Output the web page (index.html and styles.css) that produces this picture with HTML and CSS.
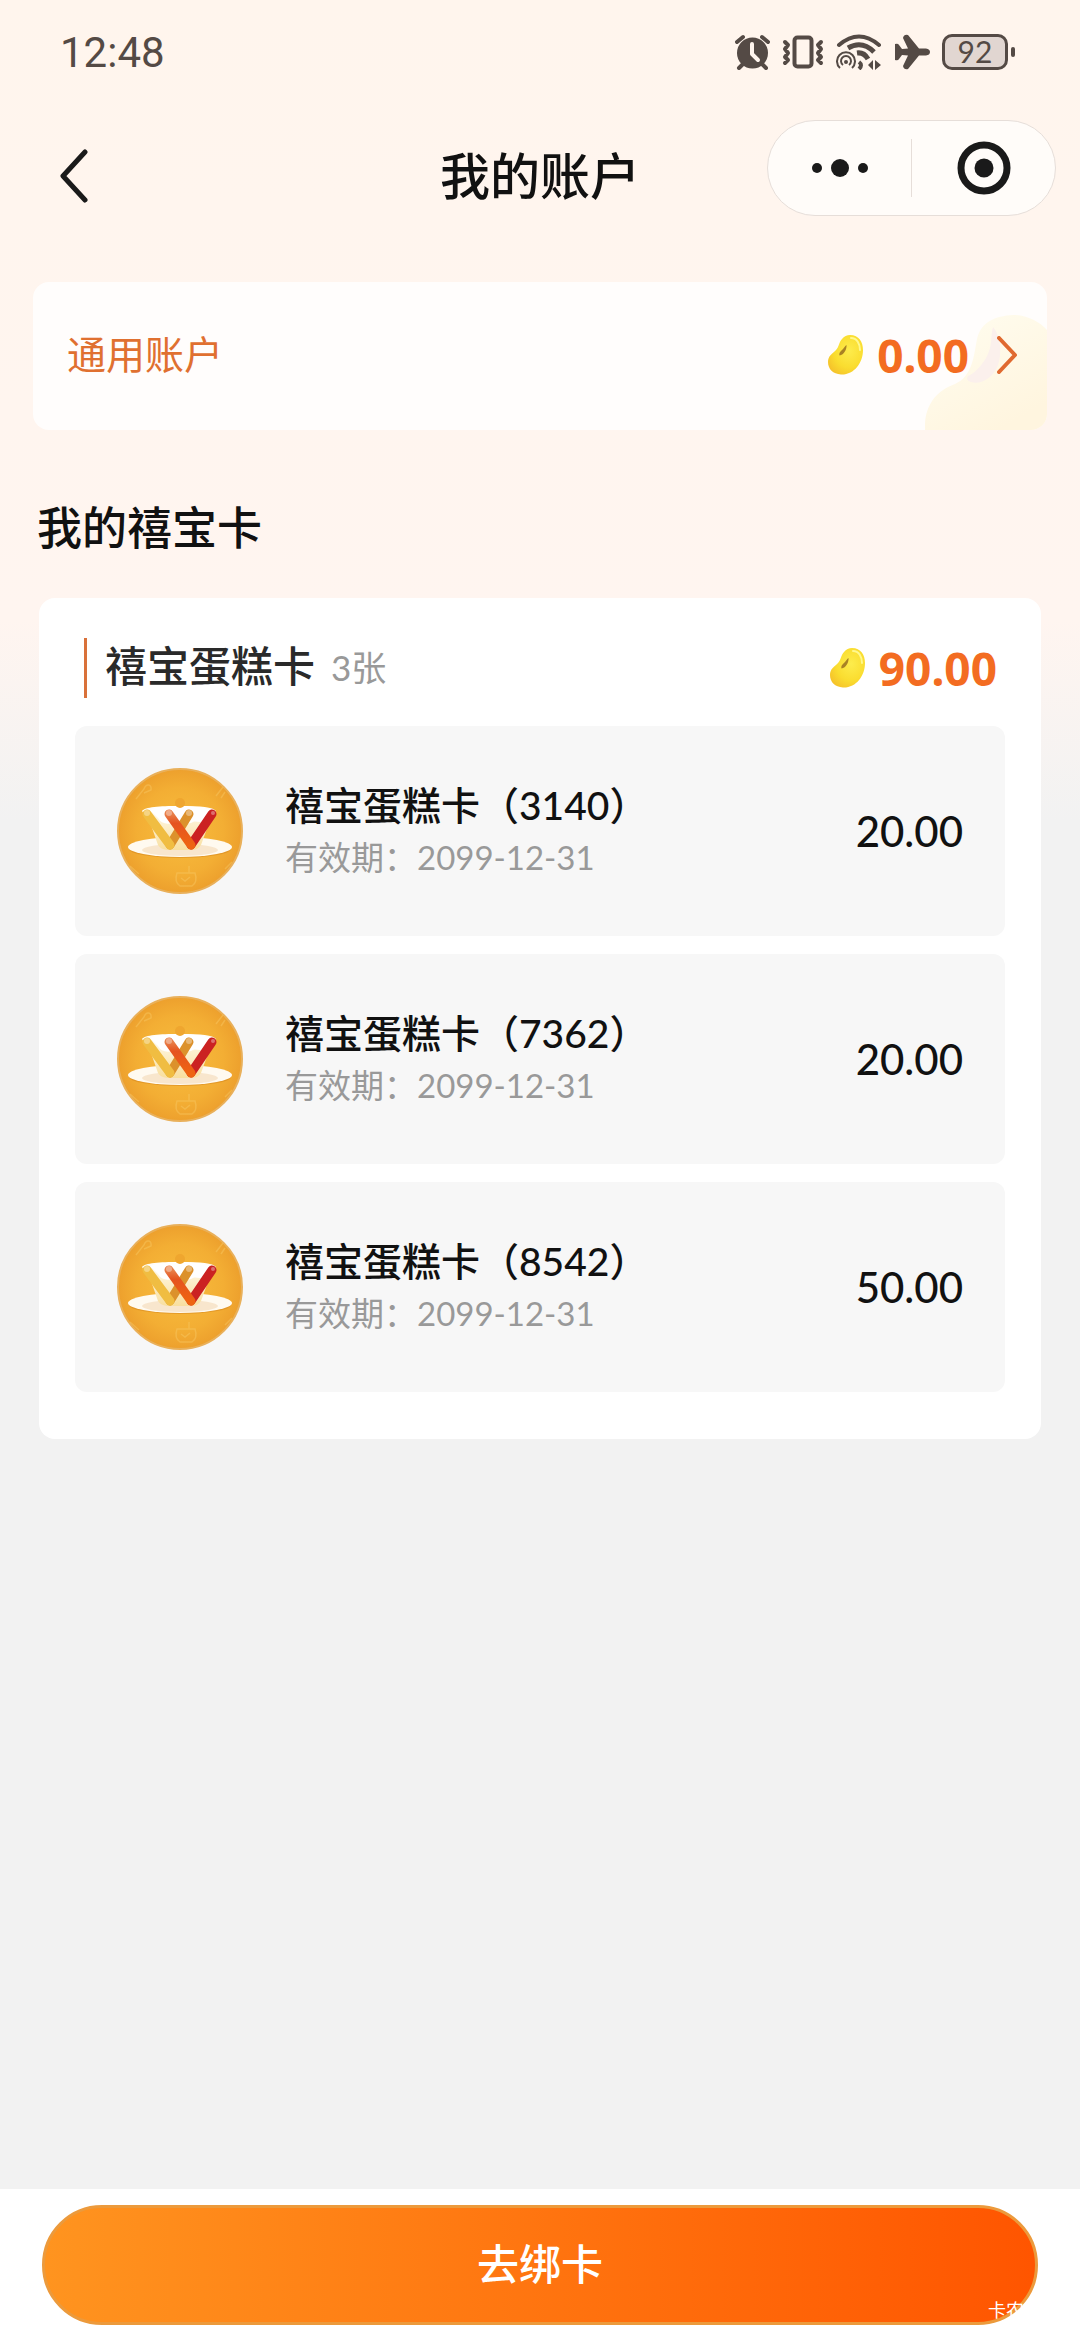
FILE: index.html
```
<!DOCTYPE html>
<html lang="zh-CN">
<head>
  <meta charset="utf-8">
  <meta name="viewport" content="width=device-width, initial-scale=1">
  <title>我的账户</title>
  <link rel="stylesheet" href="styles.css">
</head>
<body>
  <!-- shared shapes -->
  <svg class="defs" aria-hidden="true">
    <defs>
      <radialGradient id="beanFill" cx="0.6" cy="0.4" r="0.7">
        <stop offset="0" stop-color="#fdec4c"/>
        <stop offset="0.6" stop-color="#fadd30"/>
        <stop offset="1" stop-color="#f5c22a"/>
      </radialGradient>
      <linearGradient id="decoFill" x1="0" y1="0" x2="0.6" y2="1">
        <stop offset="0" stop-color="#fffdf0"/>
        <stop offset="1" stop-color="#fff5df"/>
      </linearGradient>
      <radialGradient id="logoFill">
        <stop offset="0" stop-color="#f8bd3e"/>
        <stop offset="0.7" stop-color="#f3ae34"/>
        <stop offset="1" stop-color="#eda02d"/>
      </radialGradient>
      <linearGradient id="cupFill" x1="0" y1="0" x2="0" y2="1">
        <stop offset="0" stop-color="#ffffff"/>
        <stop offset="0.4" stop-color="#fdf0cf"/>
        <stop offset="1" stop-color="#f8dfa0"/>
      </linearGradient>
      <linearGradient id="wOrange" x1="0" y1="0" x2="0" y2="1">
        <stop offset="0" stop-color="#e8804a"/>
        <stop offset="0.3" stop-color="#e5531f"/>
        <stop offset="1" stop-color="#ee6412"/>
      </linearGradient>
    </defs>
    <symbol id="bean" viewBox="0 0 35 40">
      <path d="M22 0C31 0 35 7 35 15C35 28 26 40 13 39.500C5 39 0 34 0 27C0 21 4 19 8 15C11 12 11 7 14 4C16 1.500 19 0 22 0Z" fill="url(#beanFill)"/>
      <path d="M23 3C29 3 32 9 32 15" fill="none" stroke="#fff88e" stroke-width="2" stroke-linecap="round"/>
      <path d="M18.500 10C19 14 16 20 11.500 20.500C10.500 18 13 16 15 14C16.500 12.500 17 10.500 18.500 10Z" fill="#a98224"/>
    </symbol>
    <symbol id="logo" viewBox="0 0 126 126">
      <circle cx="63" cy="63" r="62" fill="url(#logoFill)" stroke="#e9b05a" stroke-width="2"/>
      <g fill="none" stroke="#f9c964" stroke-width="1.500" opacity="0.45">
        <path d="M19 31L27 21C29 15 35 16 34 22L27 25M99 28L106 19M104 30L108 24"/>
        <path d="M60 105H78Q81 114 75 118H63Q57 114 60 105ZM72 105V98M64 110L68 113L73 109"/>
        <path d="M13 98L22 106M108 101L115 94"/>
      </g>
      <ellipse cx="63" cy="81" rx="51" ry="9" fill="#d98a20" opacity="0.6"/>
      <ellipse cx="63" cy="79" rx="52" ry="10" fill="#fffaf0"/>
      <ellipse cx="63" cy="82" rx="38" ry="6" fill="#f8e6cd"/>
      <path d="M25 43C28 39 42 38 63 38C84 38 96 39 99 43L92 55L84 77Q81 82 74 82H50Q43 81 41 77L34 57Z" fill="url(#cupFill)"/>
      <path d="M33 42C45 37 81 37 93 42L89 51C84 57 80 52 76 54C69 58 65 53 59 54C51 57 44 56 41 50Z" fill="#fff"/>
      <circle cx="63" cy="35" r="5" fill="#efa62f"/>
      <g fill="none" stroke-width="9" stroke-linecap="round">
        <path d="M72 46L53 77" stroke="#dc912b"/>
        <path d="M30 46L53 77" stroke="#f0bd42"/>
        <path d="M95 46L74 77" stroke="#cb2222"/>
        <path d="M52 46L74 77" stroke="url(#wOrange)"/>
      </g>
      <g fill="#fff" opacity="0.35">
        <circle cx="30" cy="45" r="3"/><circle cx="52" cy="45" r="3"/><circle cx="72" cy="45" r="3"/><circle cx="96" cy="45" r="2"/>
      </g>
    </symbol>
  </svg>

  <div class="page">
    <div class="status-bar">
      <span class="time">12:48</span>
      <div class="status-icons">
        <!-- alarm -->
        <svg width="35" height="36" viewBox="0 0 35 36">
          <circle cx="17.500" cy="19" r="15.500" fill="#544a45"/>
          <path d="M2 8L8 3M33 8L27 3M8 30L4 34M27 30L31 34" stroke="#544a45" stroke-width="4" stroke-linecap="round"/>
          <path d="M17 10V20L23 26" fill="none" stroke="#fff5ee" stroke-width="4" stroke-linecap="round" stroke-linejoin="round"/>
        </svg>
        <!-- vibrate -->
        <svg width="42" height="36" viewBox="0 0 42 36" fill="none" stroke="#544a45">
          <rect x="12.500" y="3.500" width="17" height="29" rx="3" stroke-width="4"/>
          <path d="M3 8L6 11L3 15L6 19L3 23L6 26L3 29M39 8L36 11L39 15L36 19L39 23L36 26L39 29" stroke-width="4" stroke-linecap="round" stroke-linejoin="round"/>
        </svg>
        <!-- wifi with hotspot -->
        <svg width="46" height="36" viewBox="0 0 46 36" fill="none" stroke="#544a45">
          <path d="M3 11Q23 -6 43 11" stroke-width="4" stroke-linecap="round"/>
          <path d="M12 14Q26 6 38 18" stroke-width="5"/>
          <path d="M21 19Q28 18 32 25" stroke-width="5"/>
          <path d="M4 34A9 9 0 1 1 16 34" stroke-width="2"/>
          <path d="M7 31A5 5 0 1 1 13 31" stroke-width="2"/>
          <circle cx="10" cy="28" r="2" fill="#544a45" stroke="none"/>
          <path d="M23 28Q27 31 23 35" stroke-width="4"/>
          <path d="M32 31L37 26V36ZM39 26L45 31L39 36Z" fill="#544a45" stroke="none"/>
        </svg>
        <!-- airplane -->
        <svg width="36" height="36" viewBox="0 0 36 36" fill="#544a45">
          <path d="M1 10Q4 9 5 11L8 15L14 14.500L9 4Q10 0 14 1L25 14.500H32Q36 15 36 18Q36 21 32 21.500H25L14 35Q10 36 9 32L14 21.500L8 21L5 25Q4 27 1 26Z"/>
        </svg>
        <div class="battery"><span>92</span></div>
      </div>
    </div>

    <header class="nav">
      <button class="back" aria-label="返回">
        <svg width="28" height="54" viewBox="0 0 28 54">
          <path d="M25 3L3 27L25 51" fill="none" stroke="#1a1a1a" stroke-width="5" stroke-linecap="round" stroke-linejoin="round"/>
        </svg>
      </button>
      <h1>我的账户</h1>
      <div class="capsule">
        <button aria-label="更多">
          <svg width="58" height="20" viewBox="0 0 58 20" fill="#1a1a1a">
            <circle cx="6" cy="10" r="5"/><circle cx="29" cy="10" r="9"/><circle cx="52" cy="10" r="5"/>
          </svg>
        </button>
        <button aria-label="关闭">
          <svg width="54" height="54" viewBox="0 0 54 54">
            <circle cx="27" cy="27" r="23" fill="none" stroke="#1a1a1a" stroke-width="7"/>
            <circle cx="27" cy="27" r="9.500" fill="#1a1a1a"/>
          </svg>
        </button>
      </div>
    </header>

    <main>
      <a class="account" href="#">
        <svg class="account-deco" width="122" height="116" viewBox="0 0 122 116">
          <path d="M0 116C-1 95 8 78 30 70C48 62 49 40 52 25C56 8 70 2 88 1C102 1 115 8 122 16V116Z" fill="url(#decoFill)"/>
          <path d="M68 13C76 22 77 40 73 51C68 64 56 71 46 68Q40 66 43 62C52 58 62 46 65 34C67 26 66 20 68 13Z" fill="#fbf0ec"/>
        </svg>
        <span class="account-name">通用账户</span>
        <svg class="bean"><use href="#bean"/></svg>
        <span class="money">0.00</span>
        <svg class="arrow" width="20" height="38" viewBox="0 0 20 38">
          <path d="M2 2L18 19L2 36" fill="none" stroke="#e06a30" stroke-width="4" stroke-linecap="round" stroke-linejoin="round"/>
        </svg>
      </a>

      <h2>我的禧宝卡</h2>

      <section class="group">
        <div class="group-head">
          <h3>禧宝蛋糕卡</h3>
          <span class="count">3张</span>
          <svg class="bean"><use href="#bean"/></svg>
          <span class="money">90.00</span>
        </div>
        <ul class="cards">
          <li class="card">
            <svg class="logo"><use href="#logo"/></svg>
            <div class="info">
              <p class="name">禧宝蛋糕卡（3140）</p>
              <p class="date">有效期：2099-12-31</p>
            </div>
            <span class="value">20.00</span>
          </li>
          <li class="card">
            <svg class="logo"><use href="#logo"/></svg>
            <div class="info">
              <p class="name">禧宝蛋糕卡（7362）</p>
              <p class="date">有效期：2099-12-31</p>
            </div>
            <span class="value">20.00</span>
          </li>
          <li class="card">
            <svg class="logo"><use href="#logo"/></svg>
            <div class="info">
              <p class="name">禧宝蛋糕卡（8542）</p>
              <p class="date">有效期：2099-12-31</p>
            </div>
            <span class="value">50.00</span>
          </li>
        </ul>
      </section>
    </main>

    <footer class="footer">
      <button class="bind">去绑卡</button>
      <span class="mark">卡农</span>
    </footer>
  </div>
</body>
</html>
```
FILE: styles.css
```
* {
  box-sizing: border-box;
}

body {
  margin: 0;
  background: #f2f2f2;
  color: #111;
  font-family: Lato, "Noto Sans CJK SC", sans-serif;
}

h1, h2, h3, p, ul {
  margin: 0;
  padding: 0;
}

h1, h2, h3 {
  font-weight: 500;
}

button {
  border: 0;
  padding: 0;
  background: none;
  font-family: inherit;
  cursor: pointer;
}

svg {
  display: block;
  flex-shrink: 0;
}

.defs {
  position: absolute;
  width: 0;
  height: 0;
}

.page {
  min-height: 100vh;
  display: flex;
  flex-direction: column;
  background: linear-gradient(#fff5ed 0, #fff5f0 620px, #f2f2f2 820px);
}

/* status bar */
.status-bar {
  height: 104px;
  padding: 0 65px 0 60px;
  display: flex;
  align-items: center;
  justify-content: space-between;
  color: #544a45;
}

.time {
  font-family: Roboto, sans-serif;
  font-size: 42px;
}

.status-icons {
  display: flex;
  align-items: center;
  gap: 12px;
}

.battery {
  position: relative;
  width: 66px;
  height: 36px;
  margin-right: 7px;
  border: 3px solid #544a45;
  border-radius: 10px;
  background: #e1d6d1;
  font-size: 30px;
  line-height: 28px;
  text-align: center;
}

.battery::after {
  content: "";
  position: absolute;
  right: -10px;
  top: 10px;
  width: 4px;
  height: 10px;
  border-radius: 2px;
  background: #544a45;
}

/* title bar */
.nav {
  height: 144px;
  padding: 0 24px;
  display: grid;
  grid-template-columns: 1fr auto 1fr;
  align-items: center;
}

.back {
  justify-self: start;
  padding: 10px 36px;
}

.nav h1 {
  font-size: 50px;
  line-height: 72px;
}

.capsule {
  justify-self: end;
  align-self: start;
  display: flex;
  align-items: center;
  width: 289px;
  height: 96px;
  margin-top: 16px;
  border: 1px solid #e6ded9;
  border-radius: 48px;
  background: #fffcf9;
}

.capsule button {
  flex: 1;
  height: 58px;
  display: flex;
  align-items: center;
  justify-content: center;
}

.capsule button + button {
  border-left: 1px solid #e6ded9;
}

main {
  padding: 34px 33px 40px;
}

.account {
  position: relative;
  display: flex;
  align-items: center;
  height: 148px;
  padding: 0 30px 2px 34px;
  border-radius: 16px;
  background: #fffdfc;
  color: #e07030;
  text-decoration: none;
  overflow: hidden;
}

.account-deco {
  position: absolute;
  right: 0;
  bottom: 0;
}

.account-name {
  flex: 1;
  padding-bottom: 6px;
  font-size: 39px;
}

.bean {
  position: relative;
  width: 35px;
  height: 40px;
}

.money {
  position: relative;
  margin-left: 14px;
  font-family: "Noto Sans", sans-serif;
  font-size: 46px;
  line-height: 60px;
  font-weight: 700;
  color: #f36c21;
}

.arrow {
  position: relative;
  margin-left: 28px;
}

h2 {
  padding: 66px 4px 38px;
  font-size: 45px;
  line-height: 64px;
}

/* card group */
.group {
  margin: 0 6px;
  padding: 40px 36px 47px;
  border-radius: 16px;
  background: #fff;
}

.group-head {
  display: flex;
  align-items: center;
  height: 60px;
  margin: 0 8px 28px 9px;
  padding-left: 18px;
  border-left: 3px solid #d9713a;
}

.group-head h3 {
  font-size: 42px;
  line-height: 56px;
  padding-bottom: 4px;
  color: #2a2a2a;
}

.count {
  flex: 1;
  margin-left: 16px;
  padding-bottom: 6px;
  font-size: 35px;
  color: #999;
}

.cards {
  display: flex;
  flex-direction: column;
  gap: 18px;
  list-style: none;
}

.card {
  display: flex;
  align-items: center;
  padding: 42px;
  border-radius: 12px;
  background: #f7f7f7;
}

.logo {
  width: 126px;
  height: 126px;
}

.info {
  flex: 1;
  margin-left: 42px;
}

.name {
  font-size: 39px;
  line-height: 52px;
  font-weight: 500;
}

.date {
  font-size: 33px;
  line-height: 52px;
  color: #999;
}

.value {
  font-size: 42px;
  line-height: 52px;
  font-weight: 500;
}

/* bottom button */
.footer {
  position: relative;
  margin-top: auto;
  padding: 16px 42px 15px;
  background: #fff;
}

.bind {
  display: block;
  width: 100%;
  height: 120px;
  padding-bottom: 8px;
  border: 3px solid #ec9a3c;
  border-radius: 60px;
  background: linear-gradient(90deg, #ff941f, #ff5500);
  color: #fff;
  font-size: 42px;
  font-weight: 500;
}

.mark {
  position: absolute;
  right: 56px;
  bottom: 17px;
  font-size: 18px;
  line-height: 26px;
  color: #fff;
}
```
